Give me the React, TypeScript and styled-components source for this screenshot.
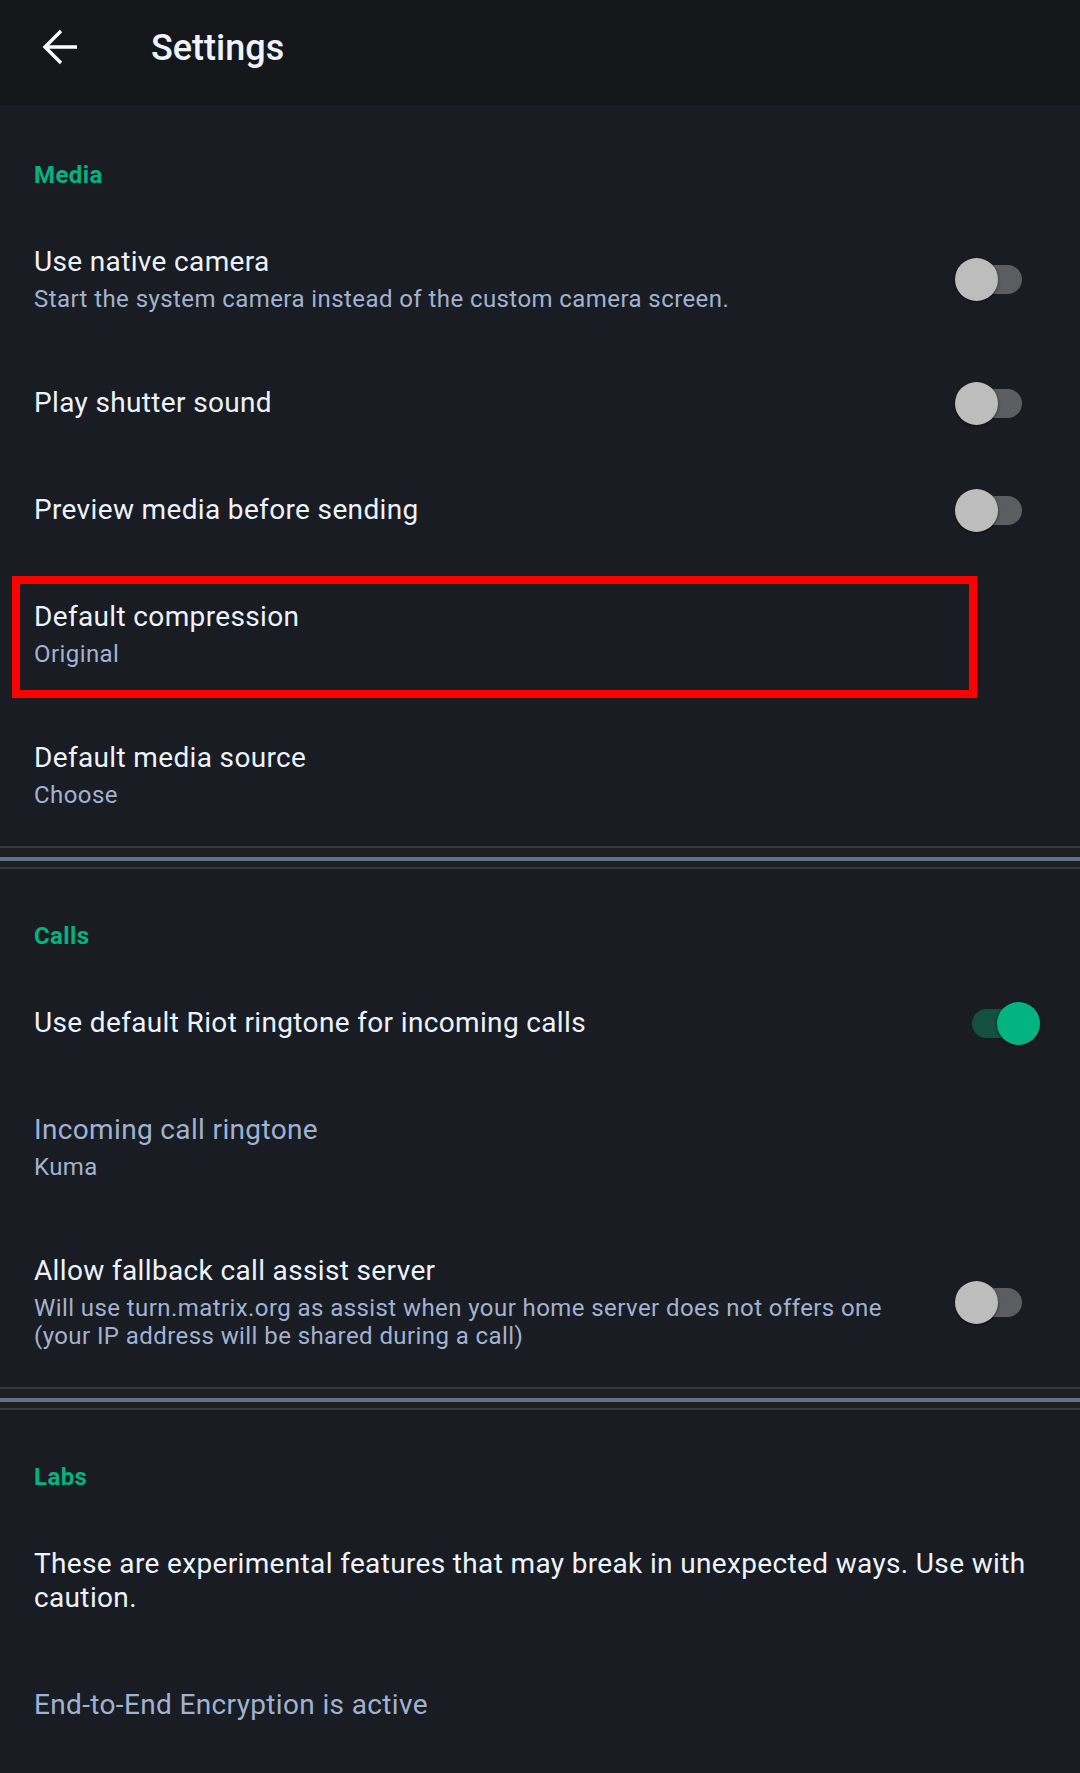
import React from "react";
import styled, { createGlobalStyle } from "styled-components";

const GlobalStyle = createGlobalStyle`
  html, body {
    margin: 0;
    padding: 0;
    background: #191c22;
  }
  body {
    font-family: Roboto, "Liberation Sans", Arial, sans-serif;
    -webkit-font-smoothing: antialiased;
  }
  * { box-sizing: border-box; }
`;

const Screen = styled.div`
  width: 1080px;
  min-height: 1773px;
  background: #191c22;
  display: flex;
  flex-direction: column;
`;

const TopBar = styled.header`
  height: 105px;
  flex: none;
  background: #16171b;
  display: flex;
  align-items: center;
  padding: 0 0 10px 40px;
`;

const BackIcon = styled.svg`
  width: 40px;
  height: 40px;
  flex: none;
  margin-top: -2px;
`;

const TopTitle = styled.h1`
  margin: 0 0 0 71px;
  font-size: 36px;
  line-height: 1;
  font-weight: 500;
  color: #edf3ff;
`;

const Content = styled.main`
  padding-top: 3px;
  display: flex;
  flex-direction: column;
`;

const CategoryTitle = styled.h2`
  margin: 0;
  padding: 53px 34px 20px;
  font-size: 24px;
  line-height: 28px;
  font-weight: 700;
  letter-spacing: 0.4px;
  color: #03b381;
`;

const Row = styled.div<{ $highlight?: boolean }>`
  position: relative;
  display: flex;
  align-items: center;
  padding: 36px 34px 37px;

  ${(p) =>
    p.$highlight &&
    `
    &::after {
      content: "";
      position: absolute;
      top: 12px;
      bottom: 7px;
      left: 12px;
      right: 103px;
      border: 8px solid #ff0000;
      pointer-events: none;
    }
  `}
`;

const TextBlock = styled.div`
  flex: 1;
  min-width: 0;
`;

const Title = styled.div<{ $muted?: boolean }>`
  font-size: 28px;
  line-height: 34px;
  font-weight: 400;
  letter-spacing: 0.35px;
  color: ${(p) => (p.$muted ? "#a1b2d1" : "#edf3ff")};
`;

const Summary = styled.div`
  margin-top: 6px;
  font-size: 24px;
  line-height: 28px;
  letter-spacing: 0.42px;
  color: #a1b2d1;
`;

const Widget = styled.div<{ $inset: number }>`
  flex: none;
  width: 126px;
  display: flex;
  justify-content: flex-end;
  padding-right: ${(p) => p.$inset}px;
`;

const Track = styled.span<{ $on: boolean }>`
  position: relative;
  display: block;
  width: 60px;
  height: 29px;
  border-radius: 15px;
  background: ${(p) => (p.$on ? "#12503f" : "#5c5d61")};
`;

const Thumb = styled.span<{ $on: boolean }>`
  position: absolute;
  top: -7px;
  left: ${(p) => (p.$on ? 25 : -7)}px;
  width: 43px;
  height: 43px;
  border-radius: 50%;
  background: ${(p) => (p.$on ? "#03b381" : "#bdbdbd")};
  box-shadow: 0 1px 3px rgba(0, 0, 0, 0.5);
`;

const Divider = styled.div`
  flex: none;
  border-top: 2px solid #38393c;
  border-bottom: 2px solid #38393c;
  background: #1e1f21;
  padding: 9px 0 6px;
`;

const DividerRule = styled.div`
  height: 4px;
  background: #61708b;
`;

function Toggle({ on, inset }: { on: boolean; inset: number }) {
  return (
    <Widget $inset={inset}>
      <Track $on={on}>
        <Thumb $on={on} />
      </Track>
    </Widget>
  );
}

type Pref = {
  title: string;
  summary?: string;
  toggle?: boolean;
  toggleInset?: number;
  muted?: boolean;
  highlight?: boolean;
};

function PrefRow({ title, summary, toggle, toggleInset = 24, muted, highlight }: Pref) {
  return (
    <Row $highlight={highlight}>
      <TextBlock>
        <Title $muted={muted}>{title}</Title>
        {summary && <Summary>{summary}</Summary>}
      </TextBlock>
      {toggle !== undefined && <Toggle on={toggle} inset={toggleInset} />}
    </Row>
  );
}

export default function App() {
  return (
    <>
      <GlobalStyle />
      <Screen>
        <TopBar>
          <BackIcon viewBox="0 0 40 40">
            <path
              d="M37 20H5 M21 4 L5 20 L21 36"
              fill="none"
              stroke="#ffffff"
              strokeWidth="3.4"
              strokeLinejoin="miter"
            />
          </BackIcon>
          <TopTitle>Settings</TopTitle>
        </TopBar>
        <Content>
          <CategoryTitle>Media</CategoryTitle>
          <PrefRow
            title="Use native camera"
            summary="Start the system camera instead of the custom camera screen."
            toggle={false}
          />
          <PrefRow title="Play shutter sound" toggle={false} />
          <PrefRow title="Preview media before sending" toggle={false} />
          <PrefRow title="Default compression" summary="Original" highlight />
          <PrefRow title="Default media source" summary="Choose" />
          <Divider>
            <DividerRule />
          </Divider>

          <CategoryTitle>Calls</CategoryTitle>
          <PrefRow
            title="Use default Riot ringtone for incoming calls"
            toggle={true}
            toggleInset={14}
          />
          <PrefRow title="Incoming call ringtone" summary="Kuma" muted />
          <PrefRow
            title="Allow fallback call assist server"
            summary="Will use turn.matrix.org as assist when your home server does not offers one (your IP address will be shared during a call)"
            toggle={false}
          />
          <Divider>
            <DividerRule />
          </Divider>

          <CategoryTitle>Labs</CategoryTitle>
          <PrefRow title="These are experimental features that may break in unexpected ways. Use with caution." />
          <PrefRow title="End-to-End Encryption is active" muted />
        </Content>
      </Screen>
    </>
  );
}
